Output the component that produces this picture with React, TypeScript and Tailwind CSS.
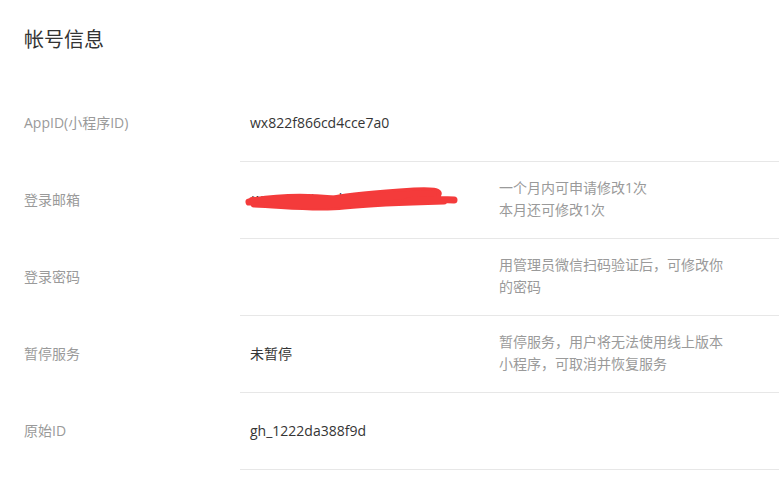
const rows = [
  { label: 'AppID(小程序ID)', value: 'wx822f866cd4cce7a0', tips: [] as string[] },
  { label: '登录邮箱', value: 'scribble', tips: ['一个月内可申请修改1次', '本月还可修改1次'] },
  { label: '登录密码', value: '', tips: ['用管理员微信扫码验证后，可修改你的密码'] },
  { label: '暂停服务', value: '未暂停', tips: ['暂停服务，用户将无法使用线上版本小程序，可取消并恢复服务'] },
  { label: '原始ID', value: 'gh_1222da388f9d', tips: [] },
];

// hand-drawn red redaction over the email address
function Scribble() {
  return (
    <div className="relative h-[30px] w-[215px]">
      <span className="absolute left-[2px] top-[4px] text-[14px] text-[#333] tracking-[1px]">
        w.....n..ij.....h3..
      </span>
      <svg className="absolute -left-[6px] top-0" width="222" height="32" viewBox="0 0 222 32" fill="none">
        <path
          d="M5 18 C30 13, 60 12, 90 15 C110 11, 140 9, 170 7 C185 6, 200 7, 192 12 C175 15, 140 16, 110 18 C140 16, 180 14, 210 16 M10 20 C40 21, 70 25, 100 22 C130 19, 160 18, 200 17"
          stroke="#f43b3b"
          strokeWidth="7"
          strokeLinecap="round"
          strokeLinejoin="round"
        />
        <path
          d="M8 16 C40 14, 80 17, 120 13 C150 10, 175 10, 190 9 M30 19 C60 23, 90 21, 130 19 M60 16 C90 17, 130 15, 160 12"
          stroke="#f43b3b"
          strokeWidth="6"
          strokeLinecap="round"
        />
      </svg>
    </div>
  );
}

export default function App() {
  return (
    <div
      className="min-h-screen bg-white pt-[28px]"
      style={{ fontFamily: '"Open Sans", "Noto Sans CJK SC", sans-serif' }}
    >
      <h2 className="pl-6 text-[20px] leading-[24px] text-[#333]">帐号信息</h2>
      <div className="mt-[33px]">
        {rows.map((row) => (
          <div key={row.label} className="flex h-[77px]">
            <div className="flex w-[240px] shrink-0 items-center pb-[3px] pl-6 text-[14px] text-[#9a9a9a]">
              {row.label}
            </div>
            <div className="flex flex-1 items-center border-b border-[#e7e7e7] pb-[2px] pl-[10px]">
              <div className="w-[249px] shrink-0 text-[14px] text-[#353535]">
                {row.value === 'scribble' ? <Scribble /> : row.value}
              </div>
              <div className="w-[232px] text-[14px] leading-[22px] text-[#9a9a9a]">
                {row.tips.map((t) => (
                  <p key={t}>{t}</p>
                ))}
              </div>
            </div>
          </div>
        ))}
      </div>
    </div>
  );
}
